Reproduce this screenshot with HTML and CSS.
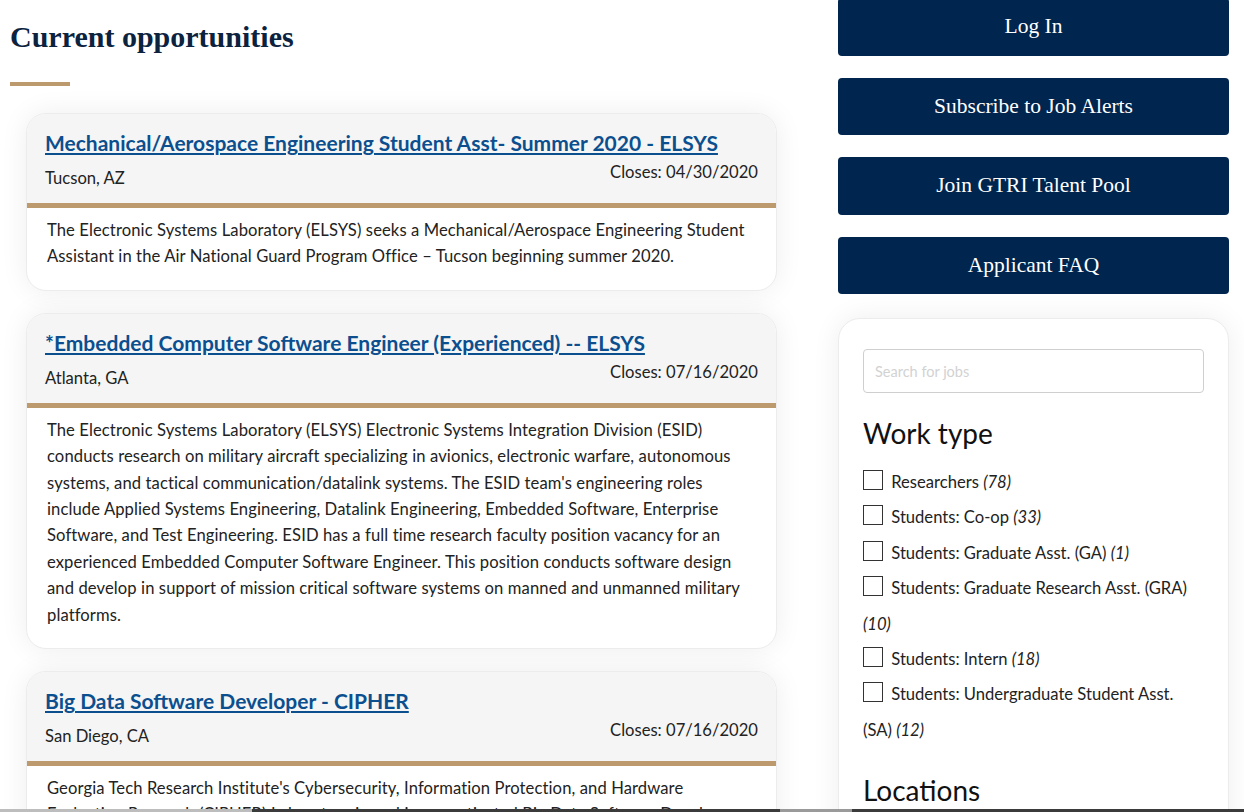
FILE: index.html
```html
<!DOCTYPE html>
<html lang="en">
<head>
<meta charset="utf-8">
<title>Current opportunities</title>
<link rel="stylesheet" href="styles.css">
</head>
<body>
<div class="page">
  <main class="main">
    <h1 class="page-title">Current opportunities</h1>
    <div class="title-rule"></div>
    <div class="job-list">
      <article class="job">
        <header class="job-head">
          <a class="job-title" href="#">Mechanical/Aerospace Engineering Student Asst- Summer 2020 - ELSYS</a>
          <div class="job-meta">
            <span class="job-loc">Tucson, AZ</span>
            <span class="job-close">Closes: 04/30/2020</span>
          </div>
        </header>
        <div class="job-body">
          <p>The Electronic Systems Laboratory (ELSYS) seeks a Mechanical/Aerospace Engineering Student Assistant in the Air National Guard Program Office – Tucson beginning summer 2020.</p>
        </div>
      </article>
      <article class="job">
        <header class="job-head">
          <a class="job-title" href="#">*Embedded Computer Software Engineer (Experienced) -- ELSYS</a>
          <div class="job-meta">
            <span class="job-loc">Atlanta, GA</span>
            <span class="job-close">Closes: 07/16/2020</span>
          </div>
        </header>
        <div class="job-body">
          <p>The Electronic Systems Laboratory (ELSYS) Electronic Systems Integration Division (ESID) conducts research on military aircraft specializing in avionics, electronic warfare, autonomous systems, and tactical communication/datalink systems. The ESID team's engineering roles include Applied Systems Engineering, Datalink Engineering, Embedded Software, Enterprise Software, and Test Engineering. ESID has a full time research faculty position vacancy for an experienced Embedded Computer Software Engineer. This position conducts software design and develop in support of mission critical software systems on manned and unmanned military platforms.</p>
        </div>
      </article>
      <article class="job">
        <header class="job-head">
          <a class="job-title" href="#">Big Data Software Developer - CIPHER</a>
          <div class="job-meta">
            <span class="job-loc">San Diego, CA</span>
            <span class="job-close">Closes: 07/16/2020</span>
          </div>
        </header>
        <div class="job-body">
          <p>Georgia Tech Research Institute's Cybersecurity, Information Protection, and Hardware Evaluation Research (CIPHER) Laboratory is seeking a motivated Big Data Software Developer to support a variety of research programs.</p>
        </div>
      </article>
    </div>
  </main>
  <aside class="side">
    <a class="side-btn" href="#">Log In</a>
    <a class="side-btn" href="#">Subscribe to Job Alerts</a>
    <a class="side-btn" href="#">Join GTRI Talent Pool</a>
    <a class="side-btn" href="#">Applicant FAQ</a>
    <div class="filters">
      <input class="search" type="text" placeholder="Search for jobs">
      <h2 class="filter-title">Work type</h2>
      <ul class="checks">
        <li><span class="box"></span> Researchers <em>(78)</em></li>
        <li><span class="box"></span> Students: Co-op <em>(33)</em></li>
        <li><span class="box"></span> Students: Graduate Asst. (GA) <em>(1)</em></li>
        <li><span class="box"></span> Students: Graduate Research Asst. (GRA) <em>(10)</em></li>
        <li><span class="box"></span> Students: Intern <em>(18)</em></li>
        <li><span class="box"></span> Students: Undergraduate Student Asst. (SA) <em>(12)</em></li>
      </ul>
      <h2 class="filter-title loc">Locations</h2>
    </div>
  </aside>
</div>
<div class="hscroll"><span class="seg-a"></span><span class="seg-b"></span><span class="seg-c"></span><span class="seg-d"></span></div>
</body>
</html>
```
FILE: styles.css
```css
* { box-sizing: border-box; }
html, body { margin: 0; padding: 0; background: #fff; }
body {
  font-family: "Source Sans Pro", Lato, "Noto Sans", sans-serif;
  color: #222;
  overflow: hidden;
  height: 812px;
}
.page {
  display: flex;
  align-items: flex-start;
}
.main {
  width: 838px;
  padding-left: 10px;
  flex: none;
}
.page-title {
  font-family: "Liberation Serif", "DejaVu Serif", serif;
  font-weight: 700;
  font-size: 30px;
  color: #0c2340;
  margin: 19px 0 0 0;
  line-height: 36px;
}
.title-rule {
  width: 60px;
  height: 4px;
  background: #bd9a6d;
  margin-top: 27px;
}
.job-list {
  margin-left: 16px;
  margin-top: 27px;
  width: 751px;
  display: flex;
  flex-direction: column;
  gap: 22px;
}
.job {
  border-radius: 20px;
  overflow: hidden;
  background: #fff;
  box-shadow: 0 0 28px rgba(0, 0, 0, 0.07);
  border: 1px solid #ececec;
}
.job-head {
  background: #f5f5f5;
  padding: 14px 18px 0 18px;
  height: 94px;
  border-bottom: 5px solid #bd9a6d;
}
.job-title {
  display: block;
  font-size: 21px;
  font-weight: 700;
  color: #0b4f8f;
  line-height: 30px;
}
.job-meta {
  display: flex;
  justify-content: space-between;
  align-items: flex-start;
  font-size: 16.6px;
  line-height: 22px;
  margin-top: 6px;
}
.job-loc { margin-top: 3px; }
.job-close { margin-top: -3px; }
.job-body {
  padding: 9px 20px 20px 20px;
  font-size: 16.6px;
  letter-spacing: 0.1px;
  line-height: 26.4px;
  color: #222;
}
.job-body p { margin: 0; }

.side {
  width: 391px;
  flex: none;
  margin-top: -2px;
  display: flex;
  flex-direction: column;
  gap: 22px;
}
.side-btn {
  display: flex;
  align-items: center;
  justify-content: center;
  height: 57.5px;
  background: #00254f;
  color: #fff;
  border-radius: 4px;
  text-decoration: none;
  font-family: "Liberation Serif", "DejaVu Serif", serif;
  font-size: 21.5px;
}
.filters {
  margin-top: 2px;
  background: #fff;
  border-radius: 22px;
  box-shadow: 0 0 28px rgba(0, 0, 0, 0.07);
  border: 1px solid #ececec;
  padding: 30px 24px 40px 24px;
}
.search {
  display: block;
  width: 100%;
  height: 44px;
  border: 1px solid #cfcfcf;
  border-radius: 4px;
  padding: 0 11px;
  font-family: inherit;
  font-size: 14.5px;
  color: #333;
  background: #fff;
}
.search::placeholder { color: #d2d2d2; }
.filter-title {
  font-weight: 400;
  font-size: 28px;
  color: #111;
  margin: 22px 0 14px 0;
  line-height: 36px;
}
.filter-title.loc { margin-top: 24px; }
.checks {
  list-style: none;
  margin: 0;
  padding: 0;
  font-size: 16.6px;
  line-height: 35.4px;
  color: #222;
}
.checks em { color: #222; }
.box {
  display: inline-block;
  width: 20px;
  height: 20px;
  border: 1px solid #333;
  vertical-align: -2px;
  margin-right: 4px;
  background: #fff;
}
.hscroll {
  position: fixed;
  left: 0;
  right: 0;
  bottom: 0;
  height: 3px;
  display: flex;
}
.seg-a { width: 252px; background: #bdbdbd; }
.seg-b { width: 528px; background: #3b3b3b; }
.seg-c { width: 72px; background: #9a9a9a; }
.seg-d { flex: 1; background: #3b3b3b; }
```
